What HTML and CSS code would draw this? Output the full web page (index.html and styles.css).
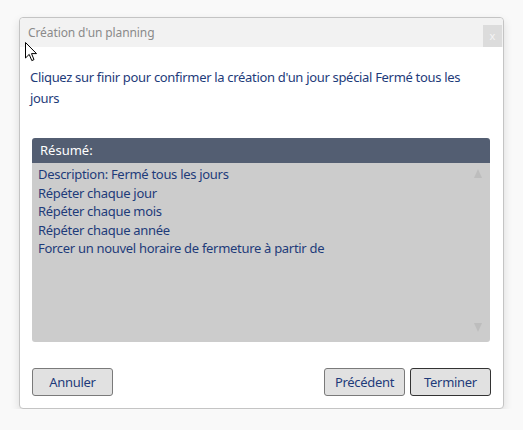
FILE: index.html
```html
<!DOCTYPE html>
<html lang="fr">
<head>
<meta charset="utf-8">
<title>Création d'un planning</title>
<link rel="stylesheet" href="styles.css">
</head>
<body>
<div class="dialog">
  <div class="titlebar">
    <span class="title">Création d'un planning</span>
    <span class="close">x</span>
  </div>
  <div class="content">
    <p class="message">Cliquez sur finir pour confirmer la création d'un jour spécial Fermé tous les jours</p>
    <div class="summary">
      <div class="summary-head">Résumé:</div>
      <div class="summary-body">
        <ul class="summary-list">
          <li>Description: Fermé tous les jours</li>
          <li>Répéter chaque jour</li>
          <li>Répéter chaque mois</li>
          <li>Répéter chaque année</li>
          <li>Forcer un nouvel horaire de fermeture à partir de</li>
        </ul>
        <div class="scroll">
          <span class="arrow-up"></span>
          <span class="arrow-down"></span>
        </div>
      </div>
    </div>
  </div>
  <div class="actions">
    <button class="btn">Annuler</button>
    <div class="right">
      <button class="btn">Précédent</button>
      <button class="btn primary">Terminer</button>
    </div>
  </div>
  <svg class="cursor" width="13" height="20" viewBox="0 0 13 20"><path d="M0.5 0.5 L0.5 16 L4.2 12.4 L6.8 18.6 L9 17.6 L6.5 11.6 L11.5 11.6 Z" fill="#fff" stroke="#000" stroke-width="1" stroke-linejoin="miter"/></svg>
</div>
</body>
</html>
```
FILE: styles.css
```css
html, body {
  margin: 0;
  padding: 0;
  background: #f9f9f9;
  font-family: "Noto Sans", "Open Sans", "DejaVu Sans", sans-serif;
}
body {
  padding: 17px 0 0 19px;
}
.dialog {
  position: relative;
  width: 483px;
  height: 390px;
  background: #fff;
  border: 1px solid #c4c4c4;
  border-radius: 4px;
  box-shadow: 0 4px 10px rgba(0, 0, 0, 0.12);
  display: flex;
  flex-direction: column;
}
.titlebar {
  height: 29px;
  background: #f2f2f2;
  border-radius: 4px 4px 0 0;
  display: flex;
  justify-content: space-between;
  align-items: flex-start;
}
.title {
  color: #8a8a8a;
  font-size: 12px;
  line-height: 29px;
  padding-left: 8px;
  letter-spacing: -0.1px;
}
.close {
  margin-top: 7px;
  margin-right: 1px;
  width: 19px;
  height: 22px;
  background: #dcdcdc;
  color: #f4f4f4;
  font-size: 11px;
  line-height: 22px;
  text-align: center;
}
.content {
  padding: 0 12px;
  flex: 1;
}
.message {
  margin: 20px 0 0 -2px;
  color: #1e3b7a;
  font-size: 13px;
  line-height: 21px;
  letter-spacing: -0.32px;
}
.summary {
  margin-top: 29px;
  width: 458px;
}
.summary-head {
  height: 25px;
  background: #535e72;
  color: #fff;
  font-size: 13px;
  line-height: 25px;
  padding-left: 8px;
  border-radius: 3px 3px 0 0;
}
.summary-body {
  height: 179px;
  background: #cccccc;
  border-radius: 0 0 3px 3px;
  display: flex;
  justify-content: space-between;
}
.summary-list {
  list-style: none;
  margin: 0;
  padding: 2px 0 0 6px;
  color: #1e3b7a;
  font-size: 13px;
  line-height: 18.5px;
  letter-spacing: -0.3px;
}
.scroll {
  width: 24px;
  display: flex;
  flex-direction: column;
  justify-content: space-between;
  align-items: center;
  padding: 6px 0 10px;
}
.arrow-up {
  width: 0;
  height: 0;
  border-left: 4px solid transparent;
  border-right: 4px solid transparent;
  border-bottom: 9px solid #bdbdbd;
}
.arrow-down {
  width: 0;
  height: 0;
  border-left: 4px solid transparent;
  border-right: 4px solid transparent;
  border-top: 9px solid #bdbdbd;
}
.actions {
  display: flex;
  justify-content: space-between;
  padding: 0 12px 12px 12px;
}
.right {
  display: flex;
  gap: 5px;
}
.btn {
  height: 28px;
  width: 81px;
  background: #e1e1e1;
  border: 1px solid #7a7a7a;
  border-radius: 3px;
  color: #1e3b7a;
  font-family: "Noto Sans", "Open Sans", "DejaVu Sans", sans-serif;
  font-size: 13px;
  letter-spacing: -0.3px;
  padding: 0;
}
.btn.primary {
  border-color: #333;
}
.cursor {
  position: absolute;
  left: 5px;
  top: 24px;
}
```
